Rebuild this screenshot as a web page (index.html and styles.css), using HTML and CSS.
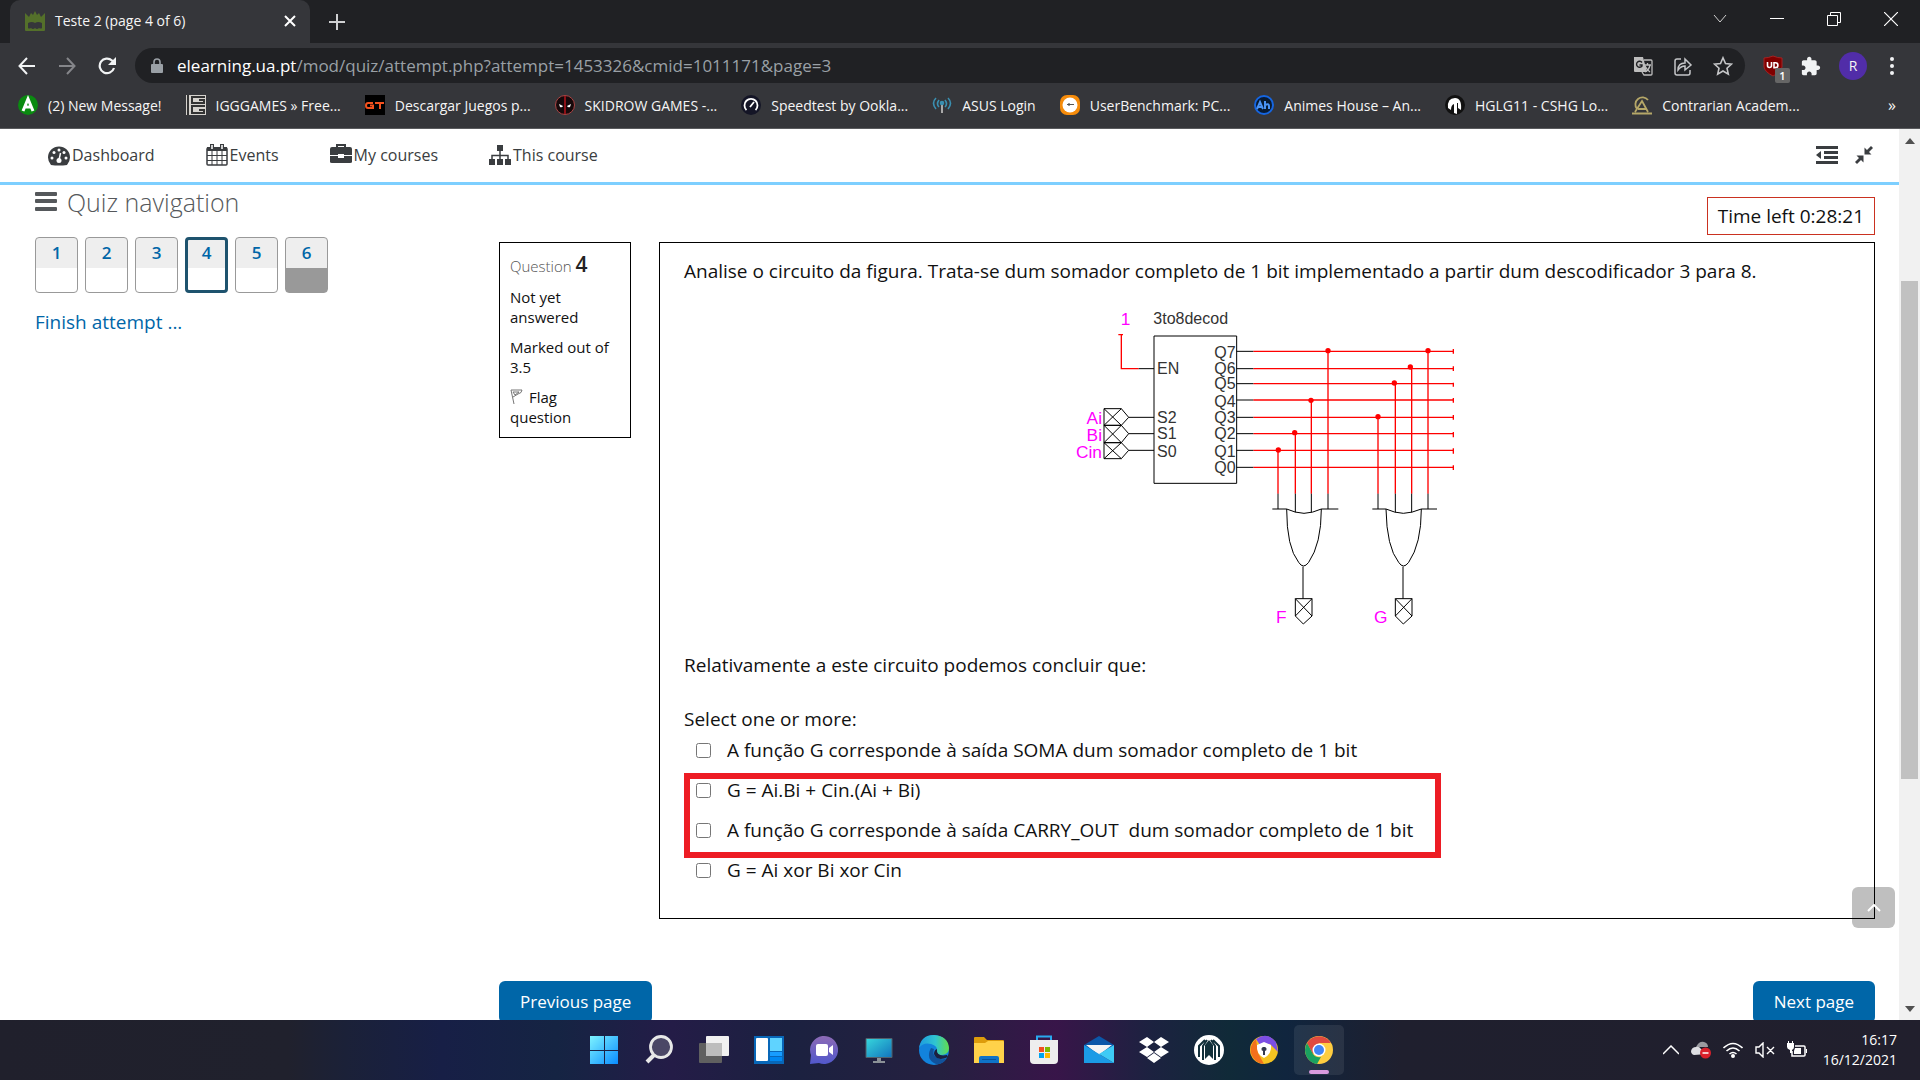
FILE: index.html
```html
<!DOCTYPE html>
<html lang="en">
<head>
<meta charset="utf-8">
<title>Teste 2 (page 4 of 6)</title>
<link rel="stylesheet" href="styles.css">
</head>
<body>
<div class="screen">

<header class="browser">
  <div class="tabstrip">
    <div class="tab">
      <svg class="tab-icon" width="20" height="20" viewBox="0 0 20 20"><path fill="#54702a" d="M0 2l4 4 2-4 2 2 2-4 2 4 2-2 2 4 4-4v17q0 1-1 1H1q-1 0-1-1z"/><path fill="#35363a" d="M3 12q4-2 7 0 3-2 7 0v5q-1 1-3 0-2 2-4 0-2 2-4 0-2 1-3 0z"/></svg>
      <span class="tab-title">Teste 2 (page 4 of 6)</span>
      <button class="plain" aria-label="Close tab"><svg width="12" height="12" viewBox="0 0 12 12" stroke="#fff" stroke-width="2"><path d="M1 1l10 10M11 1L1 11"/></svg></button>
    </div>
    <button class="plain new-tab" aria-label="New tab"><svg width="16" height="16" viewBox="0 0 16 16" stroke="#cfd0d2" stroke-width="2"><path d="M8 0v16M0 8h16"/></svg></button>
    <div class="window-buttons">
      <button class="plain" aria-label="Search tabs"><svg width="14" height="14" viewBox="0 0 14 14" fill="none" stroke="#d0d0d0"><path d="M1 3l6 7 6-7"/></svg></button>
      <button class="plain" aria-label="Minimize"><svg width="14" height="14" viewBox="0 0 14 14"><path fill="#fff" d="M0 6h14v1H0z"/></svg></button>
      <button class="plain" aria-label="Restore"><svg width="14" height="14" viewBox="0 0 14 14" fill="none" stroke="#fff"><path d="M.5 3.500h10v10H.5zM3.500 3V.5h10v10H11"/></svg></button>
      <button class="plain" aria-label="Close"><svg width="14" height="14" viewBox="0 0 14 14" stroke="#fff" stroke-width="1.200"><path d="M0 0l14 14M14 0L0 14"/></svg></button>
    </div>
  </div>

  <div class="toolbar">
    <div class="history">
      <button class="plain" aria-label="Back"><svg width="18" height="18" viewBox="0 0 18 18" fill="none" stroke="#f1f3f4" stroke-width="2"><path d="M17 9H2M9 1L1.500 9 9 17"/></svg></button>
      <button class="plain" aria-label="Forward"><svg width="18" height="18" viewBox="0 0 18 18" fill="none" stroke="#85868a" stroke-width="2"><path d="M1 9h15M9 1l7.500 8L9 17"/></svg></button>
      <button class="plain" aria-label="Reload"><svg width="18" height="18" viewBox="0 0 18 18" fill="none" stroke="#f1f3f4" stroke-width="2.200"><path d="M16 11a7.300 7.300 0 1 1-2-7.500l2 2"/><path fill="#f1f3f4" stroke="none" d="M18 0v8h-8z"/></svg></button>
    </div>
    <div class="omnibox">
      <svg width="12" height="16" viewBox="0 0 12 16"><path fill="#9aa0a6" d="M1 6h10q1 0 1 1v7q0 1-1 1H1q-1 0-1-1V7q0-1 1-1z"/><path fill="none" stroke="#9aa0a6" stroke-width="1.600" d="M3 7V4a3 3 0 0 1 6 0v3"/></svg>
      <span class="url"><b>elearning.ua.pt</b>/mod/quiz/attempt.php?attempt=1453326&amp;cmid=1011171&amp;page=3</span>
      <button class="plain" aria-label="Translate"><svg width="20" height="20" viewBox="0 0 20 20"><path fill="#bdbdbd" d="M1 1h9l4 15H2q-1 0-1-1z"/><path fill="none" stroke="#bdbdbd" stroke-width="1.300" d="M11 4h7q1 0 1 1v13q0 1-1 1h-7l-2-3M11 9h7M14.500 7v2M17 9q-1 5-5 7M12 10q2 4 5 6"/><path fill="none" stroke="#202124" stroke-width="1.400" d="M9 6.500A3 3 0 1 0 9 10V9H6.500"/></svg></button>
      <button class="plain" aria-label="Share"><svg width="20" height="20" viewBox="0 0 20 20" fill="none" stroke="#c4c5c7" stroke-width="1.500"><path d="M8 3H4Q2 3 2 5v12q0 2 2 2h11q2 0 2-2v-3M5 14q0-7 7-7V3l6 6-6 5v-4q-4 0-7 4z"/></svg></button>
      <button class="plain" aria-label="Bookmark this page"><svg width="20" height="20" viewBox="0 0 20 20" fill="none" stroke="#c4c5c7" stroke-width="1.600"><path d="M10 1.800l2.500 5.700 6 .6-4.500 4.100 1.300 6L10 15l-5.300 3.200L6 12.200 1.500 8.100l6-.6z"/></svg></button>
    </div>
    <div class="extensions">
      <button class="plain ublock" aria-label="Content blocker"><svg width="20" height="22" viewBox="0 0 20 22"><path fill="#800000" stroke="#a52222" d="M10 1q5 2 9 2v9q-1 5-9 9-8-4-9-9V3q4 0 9-2z"/><path fill="none" stroke="#fff" stroke-width="1.600" d="M4.500 7v3.500q0 2 2 2t2-2V7M11 7.800h1.500a2.400 2.400 0 0 1 0 4.800H11z"/></svg><span class="badge">1</span></button>
      <button class="plain" aria-label="Extensions"><svg width="20" height="20" viewBox="1 0 23 23" fill="#f1f3f4"><path d="M20.500 11H19V7c0-1.100-.9-2-2-2h-4V3.500C13 2.120 11.880 1 10.500 1S8 2.120 8 3.500V5H4c-1.100 0-1.990.9-1.990 2v3.800H3.500c1.490 0 2.700 1.210 2.700 2.700s-1.210 2.700-2.700 2.700H2V20c0 1.100.9 2 2 2h3.800v-1.500c0-1.490 1.210-2.700 2.700-2.700s2.700 1.210 2.700 2.700V22H17c1.100 0 2-.9 2-2v-4h1.500c1.380 0 2.500-1.120 2.500-2.500S21.880 11 20.500 11z"/></svg></button>
      <button class="plain avatar" aria-label="Profile">R</button>
      <button class="plain" aria-label="Menu"><svg width="6" height="18" viewBox="0 0 6 18" fill="#f1f3f4"><circle cx="3" cy="2" r="2"/><circle cx="3" cy="9" r="2"/><circle cx="3" cy="16" r="2"/></svg></button>
    </div>
  </div>

  <nav class="bookmarks">
    <a href="#"><svg width="20" height="20" viewBox="0 0 20 20"><circle cx="10" cy="10" r="10" fill="#0a8a10"/><path fill="none" stroke="#fff" stroke-width="3" d="M5 16l5-12 5 12M7 12h6"/></svg>(2) New Message!</a>
    <a href="#"><svg width="20" height="20" viewBox="0 0 20 20"><path fill="#d6d3ce" d="M0 0h20v20H0z"/><path fill="none" stroke="#333" stroke-width="2" d="M2 0v20M19 2H6v6h12V5h-5M19 11H6v7h12v-3h-5"/></svg>IGGGAMES » Free...</a>
    <a href="#"><svg width="20" height="20" viewBox="0 0 20 20"><path d="M0 0h20v20H0z"/><path fill="none" stroke="#f4511e" stroke-width="2" d="M8 8H3Q1 8 1 10.500T3 13h5v-2.500H5M10 8h9M15 8v6"/></svg>Descargar Juegos p...</a>
    <a href="#"><svg width="20" height="20" viewBox="0 0 20 20"><circle cx="10" cy="10" r="9.500" fill="#16090b" stroke="#a44"/><path stroke="#8c1016" stroke-width="2" d="M10 1v18"/><path fill="#fff" d="M4 9l4 2q-1 2-3 1zM16 9l-4 2q1 2 3 1z"/></svg>SKIDROW GAMES -...</a>
    <a href="#"><svg width="20" height="20" viewBox="0 0 20 20"><circle cx="10" cy="10" r="10" fill="#141526"/><path fill="none" stroke="#fff" stroke-width="1.800" d="M5.500 15a6.500 6.500 0 1 1 9 0M9 12l4-5"/></svg>Speedtest by Ookla...</a>
    <a href="#"><svg width="20" height="20" viewBox="0 0 20 20" fill="none" stroke="#3a8fb0" stroke-width="1.600"><path d="M4 3q-5 5 0 11M16 3q5 5 0 11M7 5q-3 4 0 7M13 5q3 4 0 7"/><path stroke="#aaa" stroke-width="2" d="M10 9v9"/><circle cx="10" cy="8" r="1.500" fill="#3a8fb0"/></svg>ASUS Login</a>
    <a href="#"><svg width="20" height="20" viewBox="0 0 20 20"><rect width="20" height="20" rx="7" fill="#f68c0b"/><circle cx="10" cy="10" r="7.500" fill="#fff"/><path stroke="#555" stroke-width="1.200" d="M7 9.500h7M9 8v3"/></svg>UserBenchmark: PC...</a>
    <a href="#"><svg width="20" height="20" viewBox="0 0 20 20"><circle cx="10" cy="10" r="9" fill="#071a33" stroke="#1565e0" stroke-width="2"/><path fill="none" stroke="#4a93f5" stroke-width="2" d="M3 14l3-7 3 7M4.500 12H8M11 6v8M11 10q4-2 4 1v3"/></svg>Animes House – An...</a>
    <a href="#"><svg width="20" height="20" viewBox="0 0 20 20"><circle cx="10" cy="10" r="10" fill="#111"/><path fill="#fff" d="M3 13q-1-10 7-10 7 0 6 12l-3-2V8h-1v11l-3-1V9q-3 1-3 6z"/></svg>HGLG11 - CSHG Lo...</a>
    <a href="#"><svg width="20" height="20" viewBox="0 0 20 20" fill="none" stroke="#b5a768" stroke-width="1.800"><path d="M16 5a7 7 0 1 0-11 9M3 17l7-11 6 11M0 18.500h20M6 14h8"/></svg>Contrarian Academ...</a>
    <button class="plain more" aria-label="More bookmarks">»</button>
  </nav>
</header>

<div class="viewport">
  <div class="page">
    <nav class="site-nav">
      <a href="#"><svg width="22" height="22" viewBox="0 0 22 22"><path fill="#3a3d40" d="M3 21a11 11 0 1 1 16 0q-8 1-16 0z"/><g fill="#fff"><circle cx="4" cy="14" r="1.500"/><circle cx="6" cy="8.500" r="1.500"/><circle cx="11" cy="6" r="1.500"/><circle cx="16" cy="8.500" r="1.500"/><circle cx="18" cy="14" r="1.500"/></g><path stroke="#fff" stroke-width="1.500" d="M11 16l1.500-7"/><circle cx="11" cy="16.500" r="2.500" fill="#fff"/></svg>Dashboard</a>
      <a href="#"><svg width="22" height="22" viewBox="0 0 22 22" fill="none" stroke="#3a3d40"><rect x="1" y="4" width="20" height="17" rx="1" stroke-width="1.500"/><path stroke-width="4" d="M1 5h20"/><path d="M6 7v14M11 7v14M16 7v14M1 11.500h20M1 16.500h20"/><path stroke-width="4" d="M6 0v6M16 0v6"/><path stroke="#fff" stroke-width="1.500" d="M6 1v4M16 1v4"/></svg>Events</a>
      <a href="#"><svg width="22" height="22" viewBox="0 0 22 22"><path fill="none" stroke="#3a3d40" stroke-width="2" d="M7 4V1h8v3"/><path fill="#3a3d40" d="M2 3h18q2 0 2 2v6h-8v-1H8v1H0V5q0-2 2-2zM0 12h8v2h6v-2h8v6q0 1-2 1H2q-2 0-2-1z"/></svg>My courses</a>
      <a href="#"><svg width="22" height="22" viewBox="0 0 22 22" fill="#3a3d40"><path d="M8 1h6v6H8zM0 15h6v6H0zM8 15h6v6H8zM16 15h6v6h-6z"/><path fill="none" stroke="#3a3d40" stroke-width="1.500" d="M11 6v10M3 16v-4.500h16V16"/></svg>This course</a>
      <div class="view-tools">
        <button class="plain" aria-label="Hide blocks"><svg width="22" height="18" viewBox="0 0 22 18" fill="#3a3d40"><path d="M0 0h22v3H0zM8 5h14v3H8zM8 10h14v3H8zM0 15h22v3H0zM5 5v8L0 9z"/></svg></button>
        <button class="plain" aria-label="Standard view"><svg width="18" height="18" viewBox="0 0 18 18" fill="#3a3d40"><path d="M9.500 8.500v-7L12 4l4-4 2 2-4 4 2.500 2.500zM8.500 9.500v7L6 14l-4 4-2-2 4-4-2.500-2.500z"/></svg></button>
      </div>
    </nav>

    <div class="columns">
      <aside class="quiz-nav">
        <h2><svg width="22" height="20" viewBox="0 0 22 20" fill="#55585b"><rect width="22" height="4" rx="1"/><rect y="7" width="22" height="4" rx="1"/><rect y="15" width="22" height="4" rx="1"/></svg>Quiz navigation</h2>
        <div class="numbers">
          <a href="#">1</a><a href="#">2</a><a href="#">3</a><a href="#" class="current">4</a><a href="#">5</a><a href="#" class="saved">6</a>
        </div>
        <a class="finish" href="#">Finish attempt ...</a>
      </aside>

      <main class="attempt">
        <div class="timer">Time left 0:28:21</div>
        <div class="question">
          <section class="info">
            <h3>Question <b>4</b></h3>
            <p>Not yet answered</p>
            <p>Marked out of 3.5</p>
            <p><a href="#"><svg width="14" height="16" viewBox="0 0 14 16" fill="none" stroke="#777"><path d="M1 1h11q0 3-4 4L3 8M1 1l3 14M3 3l2 3 4-3z"/></svg>Flag question</a></p>
          </section>
          <section class="content">
            <p>Analise o circuito da figura. Trata-se dum somador completo de 1 bit implementado a partir dum descodificador 3 para 8.</p>
            <svg class="circuit" width="410" height="340" viewBox="0 0 1230 1020" role="img" aria-label="3to8decod">
              <g fill="none" stroke="#f00" stroke-width="4">
                <path d="M175 104h14M184 104v102h52"/>
                <path d="M580 154h600M580 206h600M580 251h600M580 300h600M580 352h600M580 401h600M580 451h600M580 502h600"/>
                <path d="M1180 147v14M1180 199v14M1180 248v12M1180 294v14M1180 345v14M1180 396v16M1180 445v16M1180 496v14"/>
                <path d="M654 451v130M706 401v180M754 300v281M804 154v427M954 352v229M1006 251v330M1055 206v375M1104 154v427"/>
              </g>
              <g fill="#f00"><circle cx="655" cy="450" r="8"/><circle cx="704" cy="398" r="8"/><circle cx="753" cy="301" r="8"/><circle cx="804" cy="152" r="8"/><circle cx="954" cy="350" r="8"/><circle cx="1003" cy="249" r="8"/><circle cx="1051" cy="201" r="8"/><circle cx="1104" cy="152" r="8"/></g>
              <g fill="none" stroke="#000" stroke-width="3">
                <path d="M282 108h248v442H282zM236 206h46M206 352h76M206 401h76M206 451h76"/>
                <path d="M530 154h50M530 206h50M530 251h50M530 300h50M530 352h50M530 401h50M530 451h50M530 502h50"/>
                <path d="M132 326h52l22 26-22 24h-52zM132 376h52l22 25-22 27h-52zM132 428h52l22 23-22 25h-52zM132 326l52 50M184 326l-52 50M132 376l52 52M184 376l-52 52M132 428l52 48M184 428l-52 48"/>
                <path d="M654 581v46M706 581v56M754 581v56M804 581v46M637 627h43q26 12 52 13 26-1 52-13h51M680 627q0 115 36 160 14 22 30 0 38-55 38-160M729 800v96M706 896h50v52l-26 24-24-24zM706 896l50 52M756 896l-50 52"/>
                <path d="M954 581v46M1006 581v56M1055 581v56M1104 581v46M937 627h41q26 12 52 13 26-1 54-13h47M978 627q2 115 38 160 14 22 30 0 38-55 38-160M1029 800v96M1006 896h50v52l-26 24-24-24zM1006 896l50 52M1056 896l-50 52"/>
              </g>
              <g class="pin-name"><text x="280" y="71">3to8decod</text><text x="291" y="223">EN</text><text x="291" y="369">S2</text><text x="291" y="418">S1</text><text x="291" y="470">S0</text>
                <g text-anchor="end"><text x="527" y="174">Q7</text><text x="527" y="223">Q6</text><text x="527" y="267">Q5</text><text x="527" y="320">Q4</text><text x="527" y="369">Q3</text><text x="527" y="418">Q2</text><text x="527" y="470">Q1</text><text x="527" y="519">Q0</text></g></g>
              <g class="signal"><text x="182" y="76">1</text><text x="648" y="968">F</text><text x="942" y="968">G</text><g text-anchor="end"><text x="126" y="373">Ai</text><text x="126" y="422">Bi</text><text x="126" y="475">Cin</text></g></g>
            </svg>
            <p>Relativamente a este circuito podemos concluir que:</p>
            <fieldset class="answers">
              <legend>Select one or more:</legend>
              <label><input type="checkbox"> A função G corresponde à saída SOMA dum somador completo de 1 bit</label>
              <div class="marked">
                <label><input type="checkbox"> G = Ai.Bi + Cin.(Ai + Bi)</label>
                <label><input type="checkbox"> A função G corresponde à saída CARRY_OUT&nbsp; dum somador completo de 1 bit</label>
              </div>
              <label><input type="checkbox"> G = Ai xor Bi xor Cin</label>
            </fieldset>
          </section>
        </div>
        <div class="pager">
          <button class="primary">Previous page</button>
          <button class="primary">Next page</button>
        </div>
      </main>
    </div>
    <button class="plain to-top" aria-label="Back to top"><svg width="14" height="8" viewBox="0 0 14 8" fill="none" stroke="#fff" stroke-width="2"><path d="M1 7l6-6 6 6"/></svg></button>
  </div>
  <div class="scrollbar">
    <svg width="10" height="6" viewBox="0 0 10 6"><path fill="#505050" d="M0 6l5-6 5 6z"/></svg>
    <div class="track"><div class="thumb"></div></div>
    <svg width="10" height="6" viewBox="0 0 10 6"><path fill="#505050" d="M0 0l5 6 5-6z"/></svg>
  </div>
</div>

<footer class="taskbar">
  <div class="apps">
    <button class="plain" aria-label="Start"><svg width="30" height="30" viewBox="0 0 30 30"><defs><linearGradient id="win" x2="1" y2="1"><stop stop-color="#7df3ff"/><stop offset="1" stop-color="#0a8cff"/></linearGradient></defs><path fill="url(#win)" d="M1 1h14v14H1zM16 1h13v14H16zM1 16h14v13H1zM16 16h13v13H16z"/></svg></button>
    <button class="plain" aria-label="Search"><svg width="30" height="30" viewBox="0 0 30 30" fill="#4b4766" stroke="#e8e8e8"><path stroke-width="4" d="M10 20l-7 7"/><circle cx="17" cy="12" r="10.500" stroke-width="2.800"/></svg></button>
    <button class="plain" aria-label="Task view"><svg width="30" height="30" viewBox="0 0 30 30"><rect x="0" y="8" width="23" height="20" rx="1" fill="#606060"/><rect x="7" y="1" width="23" height="20" rx="1" fill="#f1f1f1"/><path fill="#bdbdbd" d="M7 8h16v13H7z"/></svg></button>
    <button class="plain" aria-label="Widgets"><svg width="30" height="30" viewBox="0 0 30 30"><path fill="#0867b8" d="M0 1h30v28H0z"/><rect x="2" y="3" width="12" height="23" rx="1" fill="#fff"/><path fill="#5fd3ff" d="M16 3h12v13H16z"/><path fill="#179dff" d="M16 17h12v4H16z"/><path fill="#0087f0" d="M16 22h12v4H16z"/></svg></button>
    <button class="plain" aria-label="Chat"><svg width="30" height="30" viewBox="0 0 30 30"><defs><linearGradient id="chat" x2="0" y2="1"><stop stop-color="#8d6ab5"/><stop offset="1" stop-color="#5158cc"/></linearGradient></defs><path fill="url(#chat)" d="M1 29l1-9a14 14 0 1 1 8 8z"/><rect x="7" y="9" width="12" height="12" rx="2" fill="#fff"/><path fill="#fff" d="M20 13l4-3v10l-4-3z"/></svg></button>
    <button class="plain" aria-label="Remote desktop"><svg width="30" height="30" viewBox="0 0 30 30"><defs><linearGradient id="mon" x2="1" y2="1"><stop stop-color="#36d7dc"/><stop offset="1" stop-color="#1273bd"/></linearGradient></defs><path fill="url(#mon)" stroke="#51606b" d="M2 3.500h26v19H2z"/><path fill="#8b9197" d="M13 23h4v3h4v2H9v-2h4z"/></svg></button>
    <button class="plain" aria-label="Edge"><svg width="30" height="30" viewBox="0 0 30 30"><defs><linearGradient id="edge"><stop stop-color="#1d9ae0"/><stop offset=".55" stop-color="#30c5d0"/><stop offset="1" stop-color="#62dc4c"/></linearGradient></defs><circle cx="15" cy="15" r="15" fill="#1283dc"/><path fill="url(#edge)" d="M0 13Q2 0 15 0q14 1 15 13 0 6-7 7-6 0-5-4 1-5-6-7Q4 7 0 13z"/><path fill="#11529b" d="M12 13q-6 11 5 16 7 1 11-6-6 3-11-1-4-3-2-8z"/><path fill="#1c2040" d="M18 14q-1 8 10 6l1 2q-11 5-14-3 0-4 3-5z"/></svg></button>
    <button class="plain" aria-label="File explorer"><svg width="30" height="30" viewBox="0 0 30 30"><path fill="#dd9c0b" d="M0 3q0-1 1-1h9l3 3h16q1 0 1 1v8H0z"/><path fill="#ffd24a" d="M0 8h11l3-2h15q1 0 1 1v21H0z"/><path fill="#0f73c8" d="M5 28v-5q0-2 2-2h16q2 0 2 2v5z"/><path stroke="#07539b" d="M8 24.500h14"/></svg></button>
    <button class="plain" aria-label="Store"><svg width="30" height="30" viewBox="0 0 30 30"><path fill="none" stroke="#29a8ef" stroke-width="2" d="M8 6V1.500h14V6"/><path fill="#eee" d="M1 5h28v20q0 4-4 4H5q-4 0-4-4z"/><path fill="#f25022" d="M10 12h5v5h-5z"/><path fill="#7fba00" d="M16 12h5v5h-5z"/><path fill="#00a4ef" d="M10 18h5v5h-5z"/><path fill="#ffb900" d="M16 18h5v5h-5z"/></svg></button>
    <button class="plain" aria-label="Mail"><svg width="30" height="30" viewBox="0 0 30 30"><path fill="#0b57a8" d="M0 10l15-9 15 9v6H0z"/><path fill="#f4f4f4" d="M2 10h26l-13 10z"/><path fill="#1b9be6" d="M0 10l30 18H0z"/><path fill="#3ecbf5" d="M30 10v18L15 19z"/></svg></button>
    <button class="plain" aria-label="Dropbox"><svg width="30" height="30" viewBox="0 0 30 30" fill="#fff"><path d="M8 2l7 5-7 5-8-5zM22 2l8 5-8 5-7-5zM8 12l7 5-7 5-8-5zM22 12l8 5-8 5-7-5zM15 18l7 5-7 5-7-5z"/></svg></button>
    <button class="plain" aria-label="Launcher"><svg width="30" height="30" viewBox="0 0 30 30"><circle cx="15" cy="15" r="15" fill="#fff"/><g fill="none" stroke="#12303a" stroke-width="2"><path d="M5 22V11l6-6M25 22V11l-6-6M9 25V11l4-6M21 25V11l-4-6"/></g><path fill="#12303a" d="M11 10l4-5 4 5v14l-4-4-4 4z"/></svg></button>
    <button class="plain" aria-label="Private browser"><svg width="30" height="30" viewBox="0 0 30 30"><circle cx="15" cy="15" r="14" fill="#f4c321"/><path fill="#f3701c" d="M15 29A14 14 0 0 1 7 4l2 14z"/><path fill="#7c4ee4" d="M7 4q11-8 20 3l2 10-8-8-10 1z"/><path fill="#fff" d="M15 7l7 3q1 9-7 13-8-4-7-13z"/><path fill="#333a50" d="M15 12a2 2 0 0 1 1 4v4h-2v-4a2 2 0 0 1 1-4z"/></svg></button>
    <button class="plain active" aria-label="Chrome"><svg width="30" height="30" viewBox="0 0 30 30"><circle cx="15" cy="15" r="14" fill="#ffcd40"/><path fill="#e04a3f" d="M3 8a14 14 0 0 1 24 0H15l-6 11z"/><path fill="#1aa260" d="M3 8l6 11q3 4 8 3l-4 7A14 14 0 0 1 3 8z"/><circle cx="15" cy="15" r="6.500" fill="#fff"/><circle cx="15" cy="15" r="5" fill="#4285f4"/></svg></button>
  </div>
  <div class="tray">
    <svg width="16" height="10" viewBox="0 0 16 10" fill="none" stroke="#fff" stroke-width="1.500"><path d="M0 9l8-8 8 8"/></svg>
    <svg width="20" height="18" viewBox="0 0 20 18"><path fill="#9a9aa0" d="M5 6q3-6 8-5 4 1 4 5z"/><path fill="#dedee2" d="M3 14q-3-1-3-4 1-4 5-4 3-1 5 2l6 5z"/><circle cx="14.500" cy="12" r="5.500" fill="#d9202b"/><path stroke="#fff" stroke-width="1.500" d="M11.500 12h6"/></svg>
    <svg class="wifi" width="20" height="16" viewBox="0 0 20 16" fill="none" stroke="#fff" stroke-width="1.600"><path d="M.5 6q9.500-9 19 0M3.500 9q6.500-6 13 0M6.500 12q3.500-3 7 0"/><circle cx="10" cy="14" r="1.200" fill="#fff"/></svg>
    <svg width="20" height="16" viewBox="0 0 20 16" fill="none" stroke="#fff" stroke-width="1.400"><path d="M1 5h3l4-4v14l-4-4H1zM12 5l7 7M19 5l-7 7"/></svg>
    <svg width="20" height="18" viewBox="0 0 20 18"><path fill="none" stroke="#fff" stroke-width="1.500" d="M8 5h9q1 0 1 1v8q0 1-1 1H5v-5"/><path fill="#fff" d="M8 7h6v6H7v-3zM19 8h1v4h-1zM0 2h7v4q0 2-2 3v3H3V9Q0 8 0 6zM1 0h1v3H1zM5 0h1v3H5z"/></svg>
    <time class="clock">16:17<br>16/12/2021</time>
  </div>
</footer>
</div>
</body>
</html>
```
FILE: styles.css
```css
* { box-sizing: border-box; }
body { margin: 0; font-family: "Open Sans", sans-serif; }
svg { flex: none; display: block; }
a { color: inherit; text-decoration: none; }
p, h2, h3 { margin: 0; }

.plain { display: flex; align-items: center; justify-content: center; border: 0; padding: 0; background: none; color: inherit; font: inherit; }
.screen { display: flex; flex-direction: column; height: 100vh; overflow: hidden; }

/* browser frame */
.browser { flex: none; background: #35363a; color: #f5f5f5; font-size: 14px; border-bottom: 1px solid #5a5b5e; }
.tabstrip { display: flex; align-items: center; height: 43px; padding-left: 10px; background: #202124; }
.tab { display: flex; align-items: center; gap: 10px; width: 300px; height: 43px; padding: 0 14px 2px 15px; border-radius: 10px 10px 0 0; background: #35363a; }
.tab-title { flex: 1; }
.new-tab { width: 54px; }
.window-buttons { display: flex; margin-left: auto; padding: 0 1px 5px 0; }
.window-buttons button { width: 57px; }

.toolbar { display: flex; align-items: center; height: 45px; }
.history { display: flex; gap: 22px; width: 135px; padding-left: 18px; }
.omnibox { display: flex; flex: 1; align-items: center; gap: 20px; height: 35px; padding: 0 12px 0 16px; border-radius: 18px; background: #202124; }
.url { flex: 1; margin-left: -6px; font-size: 17px; color: #9aa0a6; }
.url b { font-weight: 400; color: #fff; }
.extensions { display: flex; align-items: center; gap: 18px; padding: 0 25px 0 18px; }
.ublock { position: relative; }
.badge { position: absolute; left: 12px; top: 13px; width: 15px; height: 15px; border-radius: 2px; background: #666; color: #fff; font-size: 11px; font-weight: 600; line-height: 15px; text-align: center; }
.avatar { width: 28px; height: 28px; margin-right: 4px; border-radius: 50%; background: #512da8; }

.bookmarks { display: flex; align-items: center; height: 40px; padding: 0 24px 6px 18px; gap: 24px; }
.bookmarks a { display: flex; align-items: center; gap: 10px; white-space: nowrap; }
.more { margin-left: auto; font-size: 16px; }

/* page */
.viewport { display: flex; flex: 1; min-height: 0; background: #fff; }
.page { position: relative; flex: 1; min-width: 0; overflow: hidden; }
.site-nav { display: flex; align-items: center; gap: 51px; height: 56px; padding: 0 26px 2px 48px; border-bottom: 3px solid #7dcfff; font-size: 16px; color: #3a3d40; }
.site-nav a { display: flex; align-items: center; gap: 2px; }
.view-tools { display: flex; align-items: center; gap: 17px; margin-left: auto; }

.columns { display: flex; padding: 0 24px 0 35px; }
.quiz-nav { width: 464px; flex: none; }
.quiz-nav h2 { display: flex; align-items: center; gap: 10px; height: 33px; font-size: 25px; font-weight: 300; color: #55585b; }
.numbers { display: flex; gap: 7px; margin-top: 19px; }
.numbers a { width: 43px; height: 56px; border: 1px solid #999; border-radius: 4px; background: linear-gradient(#eee 30px, #fff 30px); color: #0066a8; font-size: 17px; font-weight: 600; line-height: 29px; text-align: center; }
.numbers .current { border: 3px solid #1e536e; line-height: 25px; background: linear-gradient(#eee 28px, #fff 28px); }
.numbers .saved { background: linear-gradient(#eee 30px, #999 30px); }
.finish { display: block; margin-top: 15px; font-size: 19px; line-height: 28px; color: #0066a8; }

.attempt { flex: 1; padding-top: 12px; font-size: 19px; line-height: 28px; color: #111; }
.timer { width: fit-content; margin-left: auto; padding: 4px 10px; border: 1px solid #ca3120; }
.question { display: flex; align-items: flex-start; gap: 28px; margin-top: 7px; }
.info { width: 132px; flex: none; padding: 10px; border: 1px solid #000; font-size: 15px; line-height: 20px; }
.info h3 { font-size: 15px; font-weight: 300; line-height: 22px; color: #555; }
.info h3 b { font-size: 21px; font-weight: 600; color: #222; }
.info p { margin-top: 10px; }
.info svg { display: inline-block; margin-right: 5px; vertical-align: -2px; }
.content { flex: 1; padding: 14px 28px 22px 24px; border: 1px solid #000; }
.circuit { margin: 15px auto 11px; }
.circuit text { font-family: "Liberation Sans", sans-serif; font-size: 48px; }
.pin-name { fill: #333; }
.circuit .signal text { font-size: 52px; fill: #f0f; }
.answers { margin: 26px 0 0; padding: 0; border: 0; }
.answers legend { padding: 0; margin-bottom: 3px; }
.answers label { display: flex; align-items: center; gap: 16px; padding-left: 12px; margin-bottom: 12px; }
.answers input { width: 15px; height: 15px; margin: 0; }
.marked { position: relative; width: 757px; }
.marked::after { content: ""; position: absolute; inset: -3px 0 -14px; border: 6px solid #ed1c24; pointer-events: none; }

.pager { display: flex; justify-content: space-between; margin-top: 62px; }
.primary { border: 0; padding: 7px 21px; border-radius: 6px; background: #0066a8; color: #fff; font: inherit; font-size: 17px; }
.to-top { position: absolute; right: 4px; bottom: 92px; width: 43px; height: 41px; border-radius: 6px; background: rgba(0, 0, 0, .25); }

.scrollbar { display: flex; flex-direction: column; align-items: center; width: 21px; padding: 9px 0 8px; background: #f1f1f1; }
.track { flex: 1; width: 17px; padding-top: 137px; }
.thumb { height: 498px; background: #c1c1c1; }

/* taskbar */
.taskbar { position: relative; display: flex; flex: none; justify-content: center; align-items: center; height: 60px; color: #fff; background: linear-gradient(90deg, #20202c 0, #20212d 15%, #1b2138 18%, #171f46 23%, #152443 29%, #241c47 35%, #1b2140 41%, #252040 49%, #381549 55%, #1c2240 60%, #102a38 64%, #10253e 67%, #1f1f2e 73%, #211f2d 100%); }
.apps { display: flex; gap: 5px; padding-left: 2px; }
.apps button { width: 50px; height: 50px; }
.apps .active { position: relative; border-radius: 5px; background: rgba(255, 255, 255, .08); }
.active::after { content: ""; position: absolute; left: 15px; bottom: 1px; width: 20px; height: 4px; border-radius: 2px; background: #d99bdf; }
.tray { position: absolute; right: 23px; top: 0; height: 60px; display: flex; align-items: center; gap: 12px; }
.clock { width: 78px; font-size: 14px; line-height: 20px; text-align: right; }
```
